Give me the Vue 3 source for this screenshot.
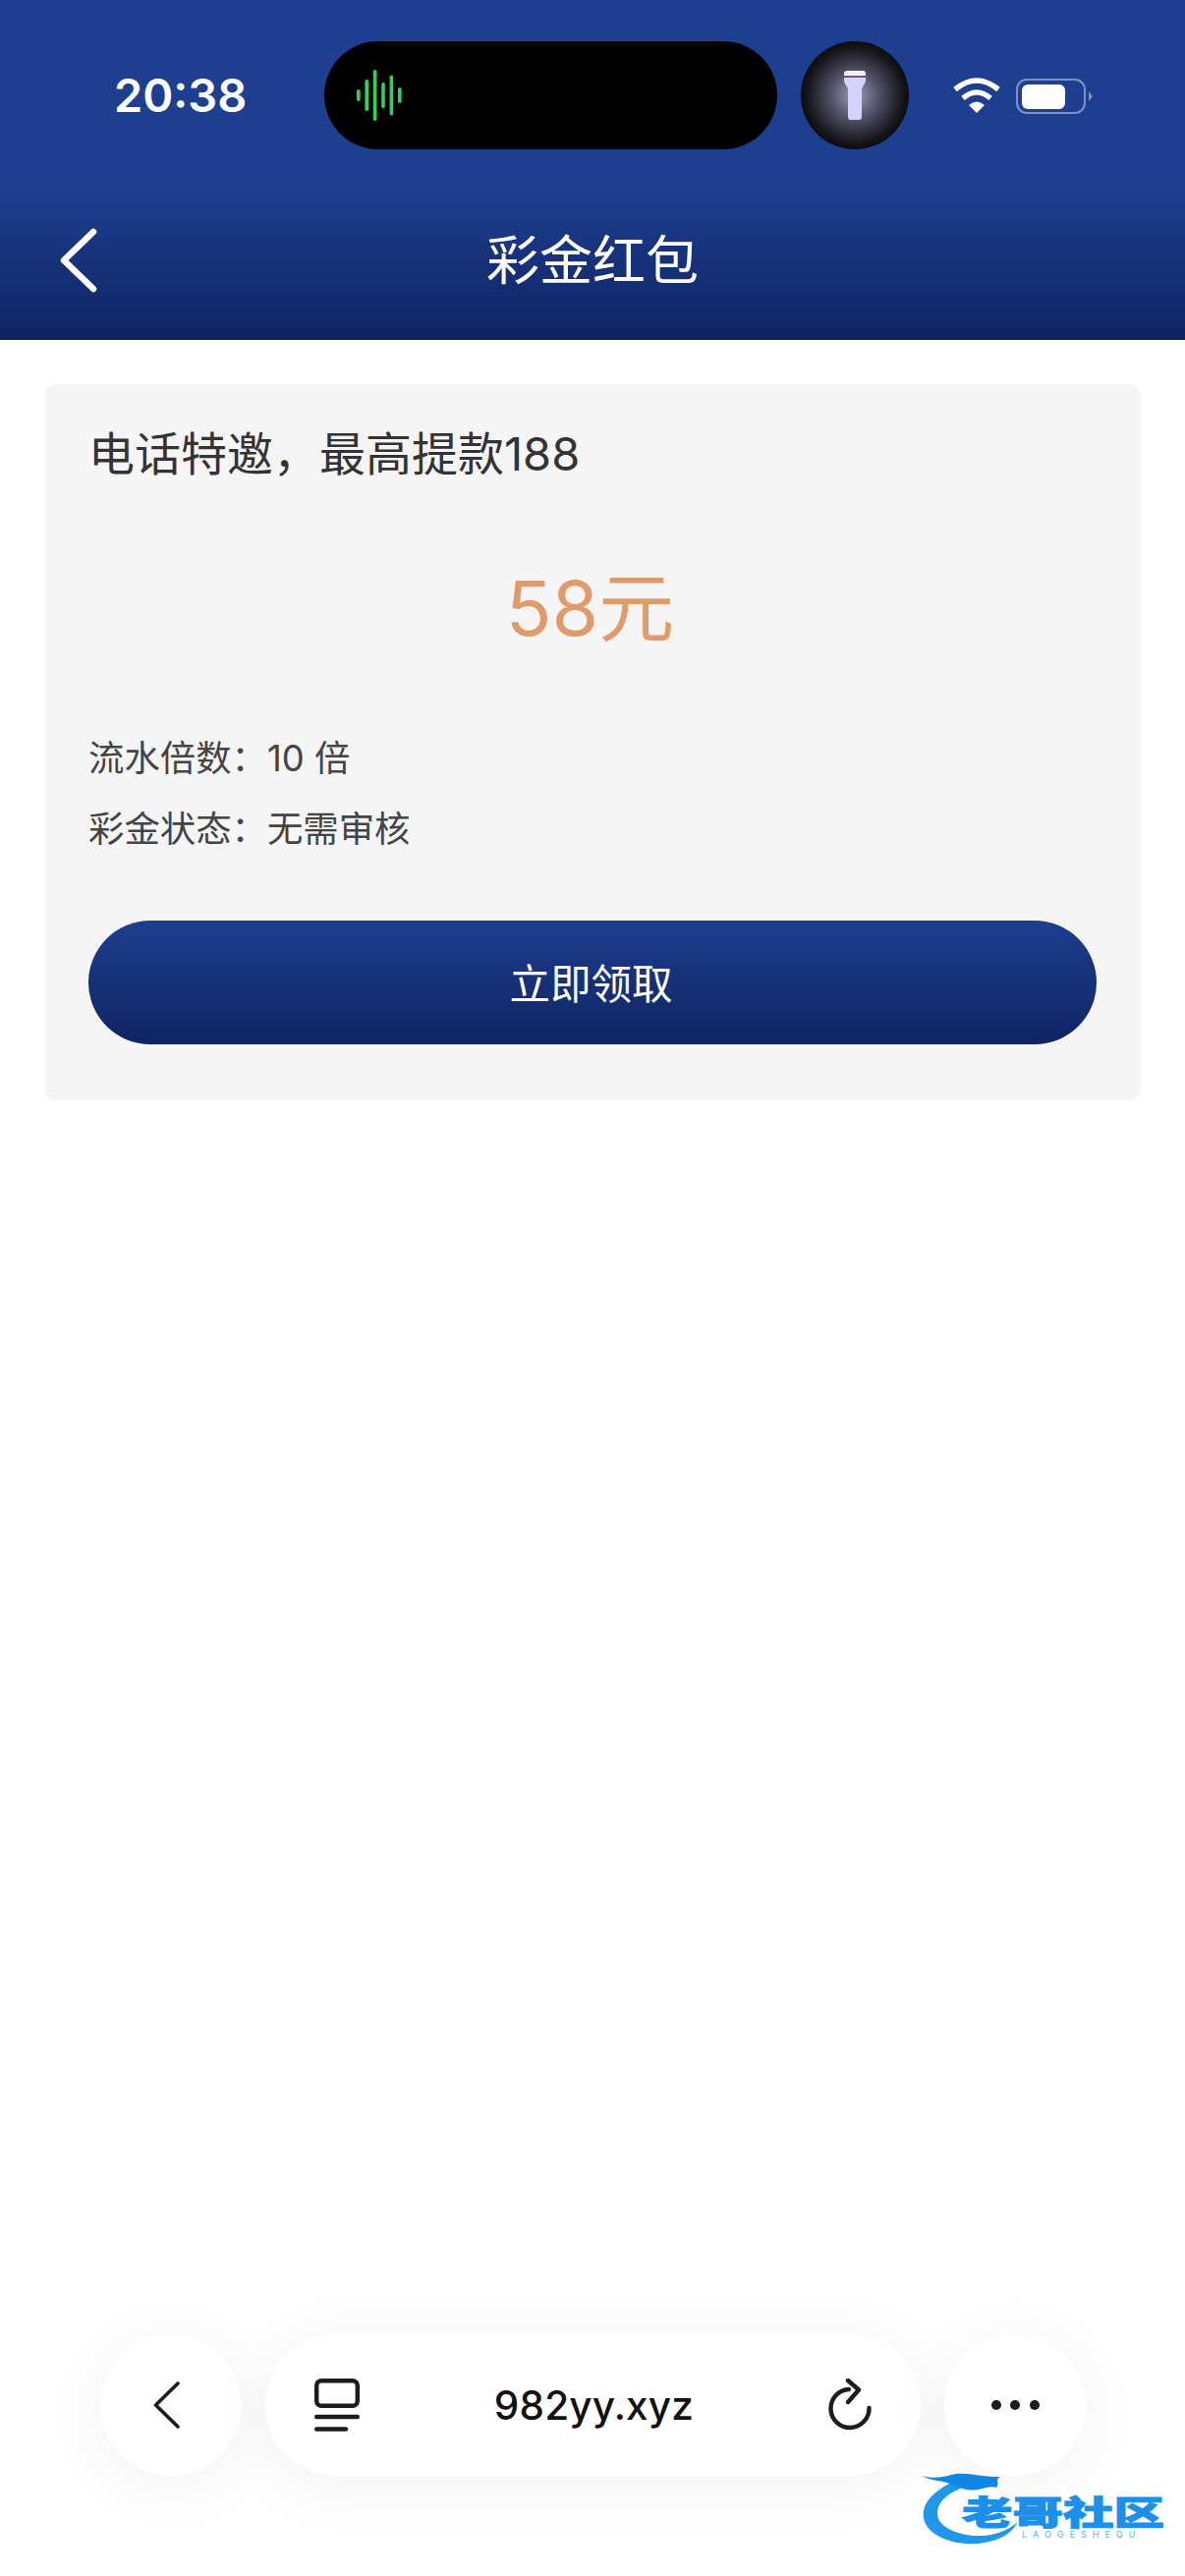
<template>
  <div class="page">
    <header class="top">
      <div class="status">
        <span class="time">20:38</span>
        <div class="island">
          <svg width="48" height="54" viewBox="0 0 48 54">
            <rect v-for="(bar, i) in bars" :key="i" :x="i * 8.4" :y="27 - bar / 2" width="3.6" :height="bar" rx="1.8" fill="#30d158" />
          </svg>
        </div>
        <div class="torch">
          <svg width="24" height="52" viewBox="0 0 24 52">
            <path d="M1 4 Q1 1 4 1 H20 Q23 1 23 4 V6 H1 Z" fill="#f6ecff" />
            <path d="M1 8 H23 V11 Q23 13 19 19 V48 Q19 51 16 51 H8 Q5 51 5 48 V19 Q1 13 1 11 Z" fill="#d5d2ff" />
          </svg>
        </div>
        <svg class="wifi" width="48" height="36" viewBox="0 0 48 36">
          <path d="M2 12 Q24 -6 46 12" fill="none" stroke="#fff" stroke-width="5.5" />
          <path d="M10 21 Q24 9 38 21" fill="none" stroke="#fff" stroke-width="5.5" />
          <path d="M16 28 Q24 21 32 28 L24 36 Z" fill="#fff" />
        </svg>
        <div class="battery">
          <div class="battery-body"><div class="battery-fill"></div></div>
          <div class="battery-cap"></div>
        </div>
      </div>
      <div class="nav">
        <svg class="nav-back" width="40" height="66" viewBox="0 0 40 66">
          <path d="M35 4 L5 33 L35 62" fill="none" stroke="#fff" stroke-width="6.5" stroke-linecap="round" stroke-linejoin="round" />
        </svg>
        <h1 class="nav-title">彩金红包</h1>
      </div>
    </header>

    <main class="content">
      <section class="card">
        <h2 class="card-title">电话特邀，最高提款188</h2>
        <p class="amount">58元</p>
        <p class="info">流水倍数：10 倍</p>
        <p class="info">彩金状态：无需审核</p>
        <button class="claim">立即领取</button>
      </section>
    </main>

    <footer class="toolbar">
      <div class="round">
        <svg class="back-icon" width="28" height="48" viewBox="0 0 28 48">
          <path d="M25 2 L2.5 24 L25 46" fill="none" stroke="#1c1c1e" stroke-width="3.6" stroke-linecap="round" stroke-linejoin="round" />
        </svg>
      </div>
      <div class="address">
        <svg width="46" height="54" viewBox="0 0 46 54">
          <rect x="2.2" y="2.2" width="41.6" height="25.6" rx="5" fill="none" stroke="#1c1c1e" stroke-width="4.4" />
          <path d="M2.2 39 H43.8" stroke="#1c1c1e" stroke-width="4.4" stroke-linecap="round" />
          <path d="M2.2 51.5 H32" stroke="#1c1c1e" stroke-width="4.4" stroke-linecap="round" />
        </svg>
        <span class="url">982yy.xyz</span>
        <svg width="44" height="54" viewBox="0 0 44 54">
          <path d="M21 11 A19.5 19.5 0 1 0 41.5 30" fill="none" stroke="#1c1c1e" stroke-width="4.4" stroke-linecap="round" />
          <path d="M20 2 L31 11.5 L20 24" fill="none" stroke="#1c1c1e" stroke-width="4.4" stroke-linecap="round" stroke-linejoin="round" />
        </svg>
      </div>
      <div class="round">
        <div class="dots"><i></i><i></i><i></i></div>
      </div>
    </footer>

    <div class="watermark">
      <svg class="dragon" width="118" height="78" viewBox="0 0 118 78">
        <path d="M30 14 C10 24 0 36 2 50 C5 68 32 78 58 76 C76 74 90 68 98 54 C88 63 72 69 54 68 C30 66 15 56 16 44 C17 32 28 24 44 18 Z" fill="#1f97ea" />
        <path d="M0 7 C10 10 20 9 30 6 C44 2 62 9 80 8 C74 11 80 14 76 19 C66 16 58 25 42 20 C34 17 26 13 16 12 C10 11 4 9 0 7 Z" fill="#0f86e4" />
      </svg>
      <span class="wm-name">老哥社区</span>
      <span class="wm-sub">LAOGESHEQU</span>
    </div>
  </div>
</template>

<script setup>
const bars = [12, 32, 52, 26, 41, 16]
</script>

<style>
html, body {
  margin: 0;
  background: #fff;
}
</style>

<style scoped>
.page {
  position: relative;
  width: 1206px;
  height: 2622px;
  display: flex;
  flex-direction: column;
  overflow: hidden;
  background: #fff;
  font-family: "Inter", "Noto Sans CJK SC", sans-serif;
}

.top {
  height: 346px;
  background: linear-gradient(180deg, #1e3e8f 0, #1e3e8f 195px, #0f2362 100%);
}

.status {
  height: 194px;
  box-sizing: border-box;
  padding-top: 42px;
  display: flex;
  align-items: flex-start;
}

.time {
  width: 330px;
  height: 110px;
  padding-left: 116px;
  box-sizing: border-box;
  line-height: 110px;
  color: #fff;
  font-size: 47px;
  font-weight: 600;
}

.island {
  width: 461px;
  height: 110px;
  border-radius: 55px;
  background: #000;
  display: flex;
  align-items: center;
  padding-left: 33px;
  box-sizing: border-box;
}

.torch {
  width: 110px;
  height: 110px;
  margin-left: 24px;
  border-radius: 50%;
  background: radial-gradient(circle, #a09eb8 0, #55546a 30%, #16161c 62%, #000 82%);
  display: flex;
  align-items: center;
  justify-content: center;
}

.wifi {
  margin: 37px 0 0 45px;
}

.battery {
  margin: 38px 0 0 16px;
  display: flex;
  align-items: center;
}

.battery-body {
  width: 71px;
  height: 36px;
  box-sizing: border-box;
  padding: 4px;
  border: 2.5px solid #7d91c3;
  border-radius: 11px;
}

.battery-fill {
  width: 44px;
  height: 25px;
  border-radius: 6px;
  background: #fff;
}

.battery-cap {
  width: 0;
  height: 0;
  margin-left: 3px;
  border-top: 5px solid transparent;
  border-bottom: 5px solid transparent;
  border-left: 4px solid #7d91c3;
}

.nav {
  height: 152px;
  position: relative;
  display: flex;
  align-items: flex-start;
  justify-content: center;
}

.nav-back {
  position: absolute;
  left: 60px;
  top: 38px;
}

.nav-title {
  margin: 0;
  padding-top: 36px;
  color: #fff;
  font-size: 54px;
  line-height: 72px;
  font-weight: 400;
}

.content {
  padding: 45px 45px 0;
}

.card {
  height: 729px;
  box-sizing: border-box;
  padding: 38px 45px 0;
  border-radius: 12px;
  background: #f5f5f5;
}

.card-title {
  margin: 0;
  color: #333;
  font-size: 47px;
  line-height: 66px;
  font-weight: 400;
}

.amount {
  margin: 80px 5px 84px 0;
  text-align: center;
  color: #e09b68;
  font-size: 77px;
  line-height: 88px;
}

.info {
  margin: 0 0 22px;
  color: #444;
  font-size: 36.4px;
  line-height: 50px;
}

.claim {
  display: block;
  width: 100%;
  height: 126px;
  margin-top: 68px;
  padding: 0 3px 2px 0;
  border: none;
  border-radius: 63px;
  color: #fff;
  font-family: inherit;
  font-size: 41.5px;
  background: linear-gradient(180deg, #1e3e8f, #0f2362);
}

.toolbar {
  margin-top: auto;
  margin-bottom: 102px;
  padding-left: 102px;
  display: flex;
  gap: 24px;
}

.round, .address {
  height: 144px;
  background: #fff;
  box-shadow: 0 10px 70px rgba(0, 0, 0, 0.06);
  display: flex;
  align-items: center;
}

.round {
  width: 144px;
  border-radius: 50%;
  justify-content: center;
}

.back-icon {
  margin-right: 9px;
}

.address {
  width: 667px;
  border-radius: 72px;
  box-sizing: border-box;
  padding: 0 50px;
  justify-content: space-between;
}

.url {
  color: #111;
  font-size: 40.5px;
  font-weight: 500;
  letter-spacing: 0.2px;
}

.dots {
  display: flex;
  gap: 9.5px;
}

.dots i {
  width: 10px;
  height: 10px;
  border-radius: 50%;
  background: #1c1c1e;
}

.watermark {
  position: absolute;
  left: 938px;
  top: 2513px;
  width: 250px;
  height: 78px;
}

.dragon {
  position: absolute;
  left: 0;
  top: 0;
}

.wm-name {
  position: absolute;
  left: 44px;
  top: 20px;
  font-size: 50px;
  line-height: 50px;
  font-weight: 900;
  color: #1b8fe9;
  -webkit-text-stroke: 1.5px #1b8fe9;
  white-space: nowrap;
  transform: scale(1.03, 0.68);
}

.wm-sub {
  position: absolute;
  left: 102px;
  top: 62px;
  font-size: 9px;
  line-height: 10px;
  color: #5db4ee;
  letter-spacing: 6px;
  white-space: nowrap;
}
</style>
